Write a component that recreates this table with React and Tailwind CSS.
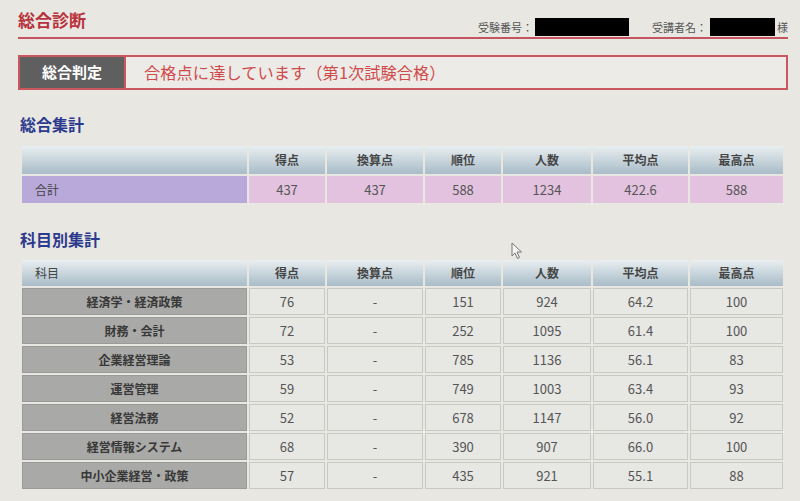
import React from 'react';

const font = { fontFamily: '"Noto Sans CJK JP", "Noto Sans", sans-serif' };

const cols = 'grid grid-cols-[225px_76px_96px_76px_88px_95px_93px] gap-[2px]';
const heads = ['得点', '換算点', '順位', '人数', '平均点', '最高点'];

const subjects = [
  ['経済学・経済政策', '76', '-', '151', '924', '64.2', '100'],
  ['財務・会計', '72', '-', '252', '1095', '61.4', '100'],
  ['企業経営理論', '53', '-', '785', '1136', '56.1', '83'],
  ['運営管理', '59', '-', '749', '1003', '63.4', '93'],
  ['経営法務', '52', '-', '678', '1147', '56.0', '92'],
  ['経営情報システム', '68', '-', '390', '907', '66.0', '100'],
  ['中小企業経営・政策', '57', '-', '435', '921', '55.1', '88'],
];

function HeadRow({ first, h }) {
  const cell = `${h} bg-gradient-to-b from-[#e9eff1] to-[#a9bcc8] flex items-center justify-center text-[12px] font-bold text-[#454545]`;
  return (
    <div className={cols}>
      <div className={`${h} bg-gradient-to-b from-[#e9eff1] to-[#a9bcc8] flex items-center pl-[13px] text-[12px] text-[#454545]`}>{first}</div>
      {heads.map(t => <div key={t} className={cell}>{t}</div>)}
    </div>
  );
}

export default function App() {
  return (
    <div style={font} className="relative w-[800px] h-[501px] overflow-hidden bg-[#e8e7e2] pl-[18px] pr-[12px]">
      <div className="flex items-end justify-between h-[39px] pb-[1px] border-b-[2px] border-[#c45560]">
        <h1 className="text-[17px] font-bold text-[#b8323c] leading-none mb-[8px]">総合診断</h1>
        <div className="flex items-center text-[11px] text-[#555]">
          <span>受験番号：</span>
          <span className="w-[94px] h-[18px] bg-black ml-[2px]" />
          <span className="ml-[23px]">受講者名：</span>
          <span className="w-[65px] h-[18px] bg-black ml-[3px]" />
          <span className="ml-[2px]">様</span>
        </div>
      </div>

      <div className="mt-[16px] h-[35px] flex border-[2px] border-[#c9575d] bg-[#ecebe7]">
        <div className="w-[106px] bg-[#5f5f5f] border-r-[2px] border-[#c9575d] flex items-center justify-center text-white font-bold text-[15px]">総合判定</div>
        <div className="flex items-center pl-[18px] text-[16.3px] text-[#cf4b4b]">合格点に達しています（第1次試験合格）</div>
      </div>

      <h2 className="mt-[26px] ml-[2px] text-[16px] font-bold text-[#2c3a8e] leading-none">総合集計</h2>
      <div className="mt-[14px] ml-[4px]">
        <HeadRow first="" h="h-[28px]" />
        <div className={`${cols} mt-[2px]`}>
          <div className="h-[27px] bg-[#b9a8da] flex items-center pl-[13px] text-[12px] text-[#444]">合計</div>
          {['437', '437', '588', '1234', '422.6', '588'].map((v, i) => (
            <div key={i} className="h-[27px] bg-[#e3c2df] flex items-center justify-center text-[13px] text-[#555]">{v}</div>
          ))}
        </div>
      </div>

      <h2 className="mt-[28px] ml-[2px] text-[16px] font-bold text-[#2c3a8e] leading-none">科目別集計</h2>
      <div className="mt-[13px] ml-[4px] flex flex-col gap-[2px]">
        <HeadRow first="科目" h="h-[26px]" />
        {subjects.map(r => (
          <div key={r[0]} className={cols}>
            <div className="h-[27px] bg-[#a9a9a7] flex items-center justify-center text-[12px] font-bold text-[#383838] border border-[#9a9a98]">{r[0]}</div>
            {r.slice(1).map((v, i) => (
              <div key={i} className="h-[27px] bg-[#e7e7e4] border border-[#c8c8c5] flex items-center justify-center text-[13px] text-[#555]">{v}</div>
            ))}
          </div>
        ))}
      </div>

      <svg className="absolute left-[511px] top-[242px]" width="12" height="18" viewBox="0 0 12 18">
        <path d="M1 1 L1 14 L4 11 L6.5 16.5 L8.5 15.5 L6 10 L10.5 10 Z" fill="#f4f4f4" stroke="#777" strokeWidth="1" />
      </svg>
    </div>
  );
}
